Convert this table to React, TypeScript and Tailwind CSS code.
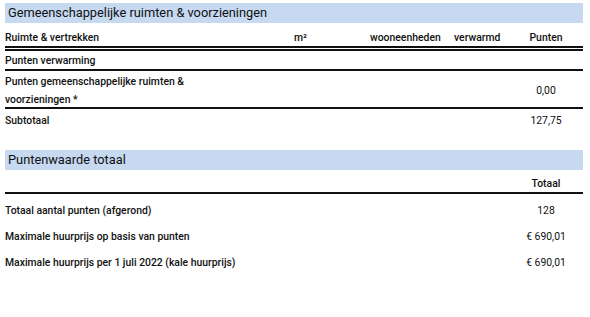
import type { ReactNode } from 'react';

const font = { fontFamily: 'Roboto, "Liberation Sans", Arial, sans-serif' };

function SectionTitle({ children }: { children: ReactNode }) {
  return (
    <div className="flex h-[20px] items-center bg-[#c6d9f1] pl-[3px] text-[12.8px] leading-none text-[#111]">
      {children}
    </div>
  );
}

const rowGrid = 'grid grid-cols-[289px_76px_84px_55px_74px]';

export default function App() {
  return (
    <div style={font} className="h-[317px] w-[590px] bg-white pl-[5px] pr-[7px] pt-[3px] text-[10.4px] leading-[12px] text-[#111]">
      {/* Gemeenschappelijke ruimten */}
      <SectionTitle>Gemeenschappelijke ruimten &amp; voorzieningen</SectionTitle>
      <div className={`${rowGrid} h-[28px] items-end border-b-[5px] border-double border-[#111] pb-[2px] font-medium`}>
        <span>Ruimte &amp; vertrekken</span>
        <span>m²</span>
        <span>wooneenheden</span>
        <span>verwarmd</span>
        <span className="text-center">Punten</span>
      </div>
      <div className={`${rowGrid} h-[20px] items-center border-b-2 border-[#111] pt-[2px] font-medium`}>
        <span className="col-span-4">Punten verwarming</span>
        <span />
      </div>
      <div className={`${rowGrid} h-[38px] items-center border-b-2 border-[#111] pt-[2px]`}>
        <span className="col-span-4 max-w-[200px] font-medium leading-[18px]">
          Punten gemeenschappelijke ruimten &amp; voorzieningen *
        </span>
        <span className="text-center">0,00</span>
      </div>
      <div className={`${rowGrid} h-[22px] items-center pt-[1px]`}>
        <span className="col-span-4 font-medium">Subtotaal</span>
        <span className="text-center">127,75</span>
      </div>

      {/* Puntenwaarde totaal */}
      <div className="mt-[19px]">
        <SectionTitle>Puntenwaarde totaal</SectionTitle>
      </div>
      <div className={`${rowGrid} h-[24px] items-end border-b-2 border-[#111] pb-[2px] font-medium`}>
        <span className="col-span-4" />
        <span className="text-center">Totaal</span>
      </div>
      <div className="pt-[4px]">
        {[
          ['Totaal aantal punten (afgerond)', '128'],
          ['Maximale huurprijs op basis van punten', '€ 690,01'],
          ['Maximale huurprijs per 1 juli 2022 (kale huurprijs)', '€ 690,01'],
        ].map(([label, value]) => (
          <div key={label} className={`${rowGrid} h-[26px] items-center`}>
            <span className="col-span-4 font-medium">{label}</span>
            <span className="text-center">{value}</span>
          </div>
        ))}
      </div>
    </div>
  );
}
